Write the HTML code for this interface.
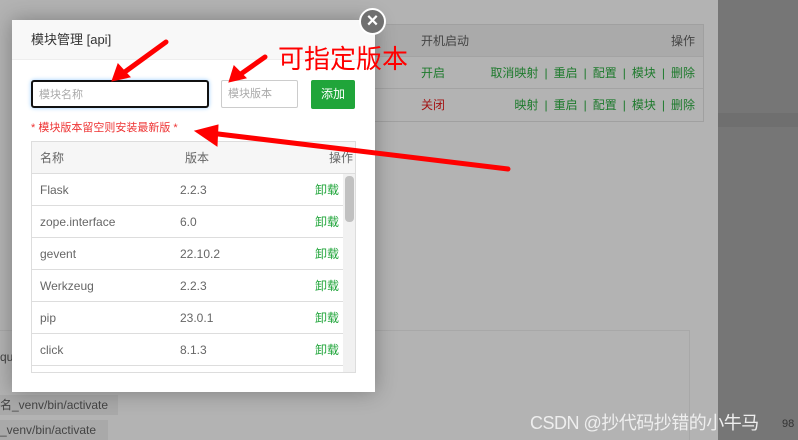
<!DOCTYPE html>
<html><head><meta charset="utf-8"><style>
*{margin:0;padding:0;box-sizing:border-box}
body{width:798px;height:440px;overflow:hidden;position:relative;background:#b3b3b3;font-family:"Liberation Sans","Noto Sans CJK SC",sans-serif;font-size:12px;color:#555}
.abs{position:absolute}
.dark{left:718px;top:0;width:80px;height:440px;background:#767676}
.bgt{left:360px;top:24px;width:344px;height:98px;border:1px solid #a0a0a0}
.bgt .r{position:absolute;left:0;width:100%;height:32px;border-bottom:1px solid #a3a3a3;line-height:32px}
.g{color:#1d7a2c}.rd{color:#a31414}
.modal{left:12px;top:20px;width:363px;height:372px;background:#fff;box-shadow:0 0 20px rgba(0,0,0,.3)}
.hd{height:40px;background:#f8f8f8;border-bottom:1px solid #eee;line-height:40px;padding-left:19px;font-size:13px;color:#333}
.in{border:1px solid #ccc;height:28px;border-radius:2px;color:#aaa;line-height:26px;padding-left:6px;font-size:11px}
.tb{left:19px;top:121px;width:325px;height:232px;border:1px solid #ddd;overflow:hidden}
.tr{position:absolute;left:0;width:311px;height:32px;border-bottom:1px solid #ddd;line-height:32px;font-size:12px;color:#666}
.tr span{position:absolute}
.sep{margin:0 6px}
</style></head><body>
<div class="abs dark"></div>
<div class="abs" style="left:0;top:330px;width:690px;height:110px;border-top:1px solid #a8a8a8;border-right:1px solid #a8a8a8"></div>
<div class="abs" style="left:718px;top:113px;width:80px;height:14px;background:#6f6f6f"></div>
<div class="abs" style="left:0;top:395px;width:118px;height:20px;background:#a9a9a9;line-height:20px;color:#444;font-size:12px">名_venv/bin/activate</div>
<div class="abs" style="left:0;top:420px;width:108px;height:20px;background:#a9a9a9;line-height:20px;color:#444;font-size:12px">_venv/bin/activate</div>
<div class="abs" style="left:0;top:350px;color:#444">qu</div>
<div class="abs bgt">
 <div class="r" style="top:0;background:#aaa"><span class="abs" style="left:60px;color:#444">开机启动</span><span class="abs" style="right:8px;color:#444">操作</span></div>
 <div class="r" style="top:32px"><span class="abs g" style="left:60px">开启</span><span class="abs g" style="right:8px">取消映射<span class="sep">|</span>重启<span class="sep">|</span>配置<span class="sep">|</span>模块<span class="sep">|</span>删除</span></div>
 <div class="r" style="top:64px;border:none"><span class="abs rd" style="left:60px">关闭</span><span class="abs g" style="right:8px">映射<span class="sep">|</span>重启<span class="sep">|</span>配置<span class="sep">|</span>模块<span class="sep">|</span>删除</span></div>
</div>
<div class="abs modal">
 <div class="hd">模块管理 [api]</div>
 <div class="abs in" style="left:19px;top:60px;width:178px;border:2px solid #111;border-radius:3px;box-shadow:0 0 4px #9cf">模块名称</div>
 <div class="abs in" style="left:209px;top:60px;width:77px">模块版本</div>
 <div class="abs" style="left:299px;top:60px;width:44px;height:29px;background:#20a53a;color:#fff;border-radius:2px;text-align:center;line-height:29px;font-size:12px">添加</div>
 <div class="abs" style="left:19px;top:99px;color:#e33;font-size:11px">* 模块版本留空则安装最新版 *</div>
 <div class="abs tb">
  <div class="tr" style="top:0;width:325px;background:#f6f6f6"><span style="left:8px">名称</span><span style="left:153px">版本</span><span style="right:4px">操作</span></div>
  <div class="tr" style="top:32px"><span style="left:8px">Flask</span><span style="left:148px">2.2.3</span><span style="right:4px;color:#20a53a">卸载</span></div>
  <div class="tr" style="top:64px"><span style="left:8px">zope.interface</span><span style="left:148px">6.0</span><span style="right:4px;color:#20a53a">卸载</span></div>
  <div class="tr" style="top:96px"><span style="left:8px">gevent</span><span style="left:148px">22.10.2</span><span style="right:4px;color:#20a53a">卸载</span></div>
  <div class="tr" style="top:128px"><span style="left:8px">Werkzeug</span><span style="left:148px">2.2.3</span><span style="right:4px;color:#20a53a">卸载</span></div>
  <div class="tr" style="top:160px"><span style="left:8px">pip</span><span style="left:148px">23.0.1</span><span style="right:4px;color:#20a53a">卸载</span></div>
  <div class="tr" style="top:192px"><span style="left:8px">click</span><span style="left:148px">8.1.3</span><span style="right:4px;color:#20a53a">卸载</span></div>
  <div class="abs" style="left:311px;top:32px;width:13px;height:200px;background:#f1f1f1"></div>
  <div class="abs" style="left:313px;top:34px;width:9px;height:46px;background:#c1c1c1;border-radius:4px"></div>
 </div>
</div>
<div class="abs" style="left:359px;top:8px;width:27px;height:27px;border-radius:50%;background:#707070;border:2px solid #fff;color:#fff;text-align:center;line-height:22px;font-size:20px;font-weight:bold">×</div>
<div class="abs" style="left:278px;top:44px;color:#f00;font-size:26px;line-height:30px">可指定版本</div>
<div class="abs" style="left:530px;top:409px;color:#eee;font-size:18px;letter-spacing:-0.5px">CSDN @抄代码抄错的小牛马</div>
<div class="abs" style="left:782px;top:418px;color:#333;font-size:11px">98</div>
<svg class="abs" style="left:0;top:0" width="798" height="440">
<g stroke="#f00" stroke-width="5" stroke-linecap="round" fill="#f00">
<line x1="166" y1="42" x2="122" y2="74"/><polygon points="112,81 118,64 130,77" stroke-width="1"/>
<line x1="265" y1="57" x2="238" y2="76"/><polygon points="229,82 234,66 246,78" stroke-width="1"/>
<line x1="508" y1="169" x2="210" y2="133"/><polygon points="195,131 218,125 217,146" stroke-width="1"/>
</g></svg>
</body></html>
